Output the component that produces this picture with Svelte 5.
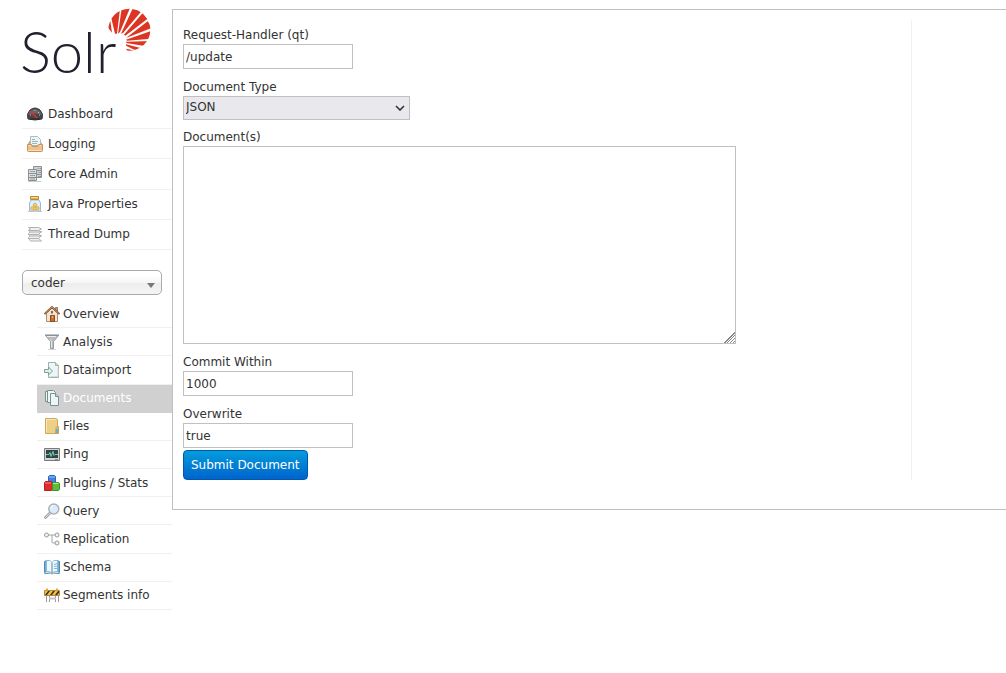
<script>
  let core = $state('coder');
  let handler = $state('/update');
  let docType = $state('JSON');
  let documents = $state('');
  let commitWithin = $state('1000');
  let overwrite = $state('true');
  let current = $state('Documents');

  const icons = {
    dashboard:
      '<path d="M1 13Q-1 8 3 4q5-4 10 0 4 4 2 9-7 2-14 0z" fill="#46464b" stroke="#38383c"/><path d="M1 9q1-5 7-6 6 1 7 6-7-3-14 0z" fill="#66666b"/><path d="M3 9l1 0M4 6l1 1M8 4v1M12 6l-1 1M13 9h-1" stroke="#bbb"/><path d="M3 5l7 7" stroke="#f02a2a" stroke-width="1.5"/><path d="M3 13h10" stroke="#222"/>',
    logging:
      '<path d="M.5 8.500l2-3.500h11l2 3.500z" fill="#d9a56e"/><path d="M3.500.500h7l3 3v6h-10z" fill="#eef6f5" stroke="#a5c0c2"/><path d="M5 3.500h3M5 5.500h6M5 7.500h5" stroke="#94b6bc"/><path d="M.5 8.500h4l1 2h5l1-2h4v6q0 1-1 1h-13q-1 0-1-1z" fill="#edc08c" stroke="#c8935a"/><path d="M1.500 14.500h13M1.500 9.500h2M12.500 9.500h2" stroke="#f9e0bc"/>',
    coreadmin:
      '<g stroke="#8b8f94"><path d="M6.500.500h8v11h-8z" fill="#cfd1d5"/><path d="M6.500 4.500h8M6.500 8.500h8"/><path d="M1.500 3.500h8v11h-8z" fill="#dcdee0"/><path d="M1.500 7.500h8M1.500 11.500h8"/></g><path d="M3 5.500h4M3 9.500h4M3 13h4M10.500 2.500h2M11 6.500h2M11 10.500h2" stroke="#9a9fb4"/><path d="M7 5.500h1M7 9.500h1M7 13h1M13 2.500h1M13 6.500h1M13 10.500h1" stroke="#62ad64"/><path d="M1 15.500h13" stroke="#ccc"/>',
    java:
      '<path d="M4 4h8l1.500 3v8h-11V7z" fill="#e1f0fb" stroke="#8fbce0"/><path d="M3.500.500h8v3h-8z" fill="#deb04c" stroke="#b98a35"/><path d="M4 1.500h7" stroke="#f8df8d"/><g fill="#f0cd72" stroke="#d0a044" stroke-width=".7"><circle cx="8" cy="9" r="1.800"/><circle cx="5.500" cy="12.300" r="1.800"/><circle cx="10.500" cy="12.300" r="1.800"/><circle cx="8" cy="12.500" r="1.500"/></g><path d="M1 15.500h14" stroke="#c4c8cc"/>',
    threads:
      '<g fill="#f0f0f0" stroke="#b0b0b0"><path d="M1.500 12.500h10l3 2.500h-11z"/><path d="M1.500 11.500l2-2h11l-3 3h-10z"/><path d="M1.500 8.500h10l3 1.500h-11z"/><path d="M1.500 7.500l2-2h11l-3 3h-10z"/><path d="M1.500 4.500h10l3 1.500h-11z"/><path d="M1.500 1.500h10l3 1.500-3 1.500h-10l2-1.500z"/></g>',
    overview:
      '<path d="M11.500 1.500h2v5h-2z" fill="#d59873" stroke="#80523a" stroke-width=".7"/><path d="M2.500 7L8 2l5.500 5v8.500h-11z" fill="#f5e5cd" stroke="#b08d6c"/><path d="M.5 8L8 1l7.500 7" fill="none" stroke="#754b36" stroke-width="1.800"/><path d="M1 7.500L8 1l7 6.500" fill="none" stroke="#d3aa8d" stroke-width=".8"/><path d="M6.500 9.500h4v6h-4z" fill="#cc6f2e" stroke="#8f4b1f"/><path d="M7 5h2v2.500H7z" fill="#7c6d64"/><path d="M8.500 10v2" stroke="#f2b577"/>',
    analysis:
      '<path d="M1.500 1.500h13l-5 6v7h-3v-7z" fill="#b9bcc0" stroke="#97999d"/><path d="M3 2.500h9M6 5.500l1.500 2v6" stroke="#eceded" fill="none"/><path d="M1 1h14" stroke="#85888c"/><path d="M4 15.500h8" stroke="#d5d5d5"/>',
    dataimport:
      '<path d="M4.500.500h7l3 3v12h-10z" fill="#edf5f5" stroke="#9ab3b3"/><path d="M11.500.500v3h3" fill="#c7dada" stroke="#9ab3b3"/><path d="M6 14.500h8v-8" fill="none" stroke="#cddcdc"/><path d="M.5 7.500h4V5l4 4-4 4v-2.500h-4z" fill="#e3f1ee" stroke="#7f9f9a"/>',
    documents:
      '<g fill="#edf6f4" stroke="#76938f"><path d="M1.500 1.500h5l2 2v8h-7z"/><path d="M3.500.500h6l2 2v10h-8z"/><path d="M6.500 3.500h5l3 3v9h-8z"/><path d="M11.500 3.500v3h3" fill="#bed5d1"/></g>',
    files:
      '<path d="M1.500.500h11l1 1v14h-12z" fill="#edd087" stroke="#cfa858"/><path d="M2.500 14V1.500h9" fill="none" stroke="#f8e6b3"/><path d="M12 9.500l2.500-1v7h-3z" fill="#e5c473" stroke="#c9a153"/><path d="M13 11v4" stroke="#49b5ed" stroke-width="1.800"/>',
    ping:
      '<path d="M.5 2.500h15v12H.5z" fill="#d1d3d4" stroke="#777b7e"/><path d="M2 4h12v8H2z" fill="#34434a"/><path d="M2 8.500h3l1-2 1 4 2-5 1 4 1-1h3" fill="none" stroke="#72d2aa"/><path d="M11 13.500h3" stroke="#829085"/>',
    plugins:
      '<path d="M4.500 1.500l1-1h5l1 1v6l-1 1h-6z" fill="#3e83e4" stroke="#2966bd"/><path d="M5 2h6" stroke="#9bc3fa"/><path d="M.5 7.500l1-1h6l1 1v7l-1 1h-7z" fill="#e02b2b" stroke="#b51f1f"/><path d="M1 8h6" stroke="#fa8b79"/><path d="M8.500 8.500l1-1h5l1 1v6l-1 1h-6z" fill="#60bc3c" stroke="#429129"/><path d="M9 8.500h5" stroke="#b8eb91"/>',
    query:
      '<path d="M6 10l-4.500 4.500" stroke="#a1a3a7" stroke-width="2.800" stroke-linecap="round"/><path d="M6 10l-4.500 4.500" stroke="#dcdee0" stroke-linecap="round"/><circle cx="9.800" cy="6" r="5" fill="#dcebf9" stroke="#abb1b9" stroke-width="1.500"/><path d="M6.500 6q0-3 3-3.500" stroke="#fff" fill="none"/><path d="M6 15.500h8" stroke="#ececec"/>',
    replication:
      '<path d="M4 4h8M8 4v7q0 1 1 1h3" fill="none" stroke="#a5a5a5"/><g fill="#f4f4f4" stroke="#999"><circle cx="2.500" cy="4" r="2"/><circle cx="13" cy="4" r="2"/><circle cx="13" cy="12" r="2"/></g>',
    schema:
      '<path d="M.5 2.500l2-1v11l-2 1zM15.500 2.500l-2-1v11l2 1z" fill="#73aed3" stroke="#4c8db8"/><path d="M.5 14.500l6-.5 1.500 1 1.500-1 6 .5" fill="none" stroke="#4583aa"/><path d="M2.500 1.500q4-1 5.500 2 1.500-3 5.500-2v11q-4-.5-5.500 2-1.500-2.500-5.500-2z" fill="#eff8fd" stroke="#8dbbd5"/><path d="M8 4v10" stroke="#4e86a6"/><path d="M10 5.500l3-1M10 7.500l3-.5M10 9.500h3" stroke="#88b0c8"/>',
    segments:
      '<path d="M2.500 7v8M5.500 7v8M11.500 7v8M14.500 7v8" stroke="#999"/><path d="M5 11.500h7" stroke="#c4c4c4" stroke-width="2"/><path d="M.5 3.500h15v5H.5z" fill="#fac03c" stroke="#b08a3c"/><path d="M1 8l3-4h2L3 8zM6 8l3-4h2L8 8zM11 8l3-4h1v2l-2 2z" fill="#35322c"/><path d="M3 1.500v2M13 1.500v2" stroke="#eba845" stroke-width="2"/>'
  };

  const mainMenu = [
    { label: 'Dashboard', icon: 'dashboard' },
    { label: 'Logging', icon: 'logging' },
    { label: 'Core Admin', icon: 'coreadmin' },
    { label: 'Java Properties', icon: 'java' },
    { label: 'Thread Dump', icon: 'threads' }
  ];

  const coreMenu = [
    { label: 'Overview', icon: 'overview' },
    { label: 'Analysis', icon: 'analysis' },
    { label: 'Dataimport', icon: 'dataimport' },
    { label: 'Documents', icon: 'documents' },
    { label: 'Files', icon: 'files' },
    { label: 'Ping', icon: 'ping' },
    { label: 'Plugins / Stats', icon: 'plugins' },
    { label: 'Query', icon: 'query' },
    { label: 'Replication', icon: 'replication' },
    { label: 'Schema', icon: 'schema' },
    { label: 'Segments info', icon: 'segments' }
  ];

  function submitDocument(event) {
    event.preventDefault();
  }
</script>

{#snippet menu(items)}
  {#each items as item}
    <li class:active={item.label === current}>
      <a href="#{item.icon}" onclick={() => (current = item.label)}>
        <svg class="icon" viewBox="0 0 16 16" fill="none" aria-hidden="true">{@html icons[item.icon]}</svg>
        {item.label}
      </a>
    </li>
  {/each}
{/snippet}

<div class="page">
  <aside>
    <a class="logo" href="#home">
      <span>Solr</span>
      <svg viewBox="290 25 132 132" aria-hidden="true">
        <clipPath id="sun"><circle cx="357" cy="90" r="63" /></clipPath>
        <g clip-path="url(#sun)" fill="#dc3522">
          <path d="M285 75L300 64 305 99Z" />
          <path d="M303 56L330 20 320 102 314 102Z" />
          <path d="M335 20H361L329 97 323 102Z" />
          <path d="M370 20L392 36 338 100 332 102Z" />
          <path d="M397 40L411 58 345 108 341 105Z" />
          <path d="M412 65L426 84 347 115Z" />
          <path d="M428 92V117L350 123 347 120Z" />
          <path d="M425 124L407 140 348 130V126Z" />
          <path d="M402 148L386 157 347 138V134Z" />
          <path d="M380 154L355 160 347 147Z" />
        </g>
      </svg>
    </a>
    <nav>
      <ul class="main-menu">{@render menu(mainMenu)}</ul>
      <div class="core-selector">
        <select bind:value={core} aria-label="Core Selector">
          <option>coder</option>
        </select>
        <svg viewBox="0 0 8 5" aria-hidden="true"><path d="M0 0h8L4 5z" fill="#777" /></svg>
      </div>
      <ul class="core-menu">{@render menu(coreMenu)}</ul>
    </nav>
  </aside>

  <main>
    <form onsubmit={submitDocument}>
      <label for="qt">Request-Handler (qt)</label>
      <input id="qt" type="text" bind:value={handler} />

      <label for="document-type">Document Type</label>
      <div class="type-select">
        <select id="document-type" bind:value={docType}>
          <option>JSON</option>
          <option>CSV</option>
          <option>XML</option>
        </select>
        <svg viewBox="0 0 10 6" aria-hidden="true">
          <path d="M1 1l4 4 4-4" fill="none" stroke="#333" stroke-width="1.6" />
        </svg>
      </div>

      <label for="document">Document(s)</label>
      <textarea id="document" bind:value={documents}></textarea>

      <label for="commit-within">Commit Within</label>
      <input id="commit-within" type="text" bind:value={commitWithin} />

      <label for="overwrite">Overwrite</label>
      <input id="overwrite" type="text" bind:value={overwrite} />

      <button type="submit">Submit Document</button>
    </form>
  </main>
</div>

<style>
  :global(body) {
    background: #fff;
    color: #333;
    font: 12px/16px 'DejaVu Sans', sans-serif;
  }

  .page {
    display: flex;
    align-items: flex-start;
    padding-top: 9px;
  }

  aside {
    flex: none;
    box-sizing: border-box;
    width: 172px;
    padding-left: 22px;
  }

  .logo {
    position: relative;
    display: block;
    height: 90px;
    margin-left: -2px;
    color: #231f2e;
    font: 300 58px/84px Lato, sans-serif;
    text-decoration: none;
  }

  .logo svg {
    position: absolute;
    top: -1px;
    left: 87px;
    width: 44px;
    height: 44px;
  }

  ul {
    display: grid;
    grid-auto-rows: 1fr;
    margin: 0;
    padding: 0;
    list-style: none;
  }

  .main-menu {
    min-height: 151px;
  }

  .core-menu {
    min-height: 310px;
    margin: 5px 0 0 15px;
  }

  li {
    display: flex;
    border-bottom: 1px solid #f0f0f0;
  }

  li a {
    display: flex;
    flex: 1;
    align-items: center;
    gap: 5px;
    padding-left: 5px;
    color: #333;
    text-decoration: none;
  }

  .core-menu a {
    gap: 3px;
    padding-left: 7px;
  }

  .active {
    background: #d0d0d0;
    border-color: #d0d0d0;
  }

  .active a {
    color: #fff;
  }

  .icon {
    flex: none;
    width: 16px;
    height: 16px;
  }

  select,
  input,
  textarea,
  button {
    box-sizing: border-box;
    margin: 0;
    color: #333;
    font: inherit;
  }

  select {
    display: block;
    width: 100%;
    appearance: none;
  }

  .core-selector,
  .type-select {
    position: relative;
  }

  .core-selector {
    margin: 20px 10px 0 0;
  }

  .core-selector select {
    height: 25px;
    padding: 1px 8px 0;
    border: 1px solid #aaa;
    border-radius: 5px;
    background: linear-gradient(#fff 20%, #f6f6f6 50%, #eee 52%, #f4f4f4 100%);
  }

  .core-selector svg {
    position: absolute;
    top: 13px;
    right: 7px;
    width: 8px;
    height: 5px;
    pointer-events: none;
  }

  main {
    flex: 1;
    min-width: 0;
    padding: 10px 94px 29px 10px;
    border: 1px solid #c0c0c0;
    border-right: 0;
  }

  form {
    padding-top: 7px;
    border-right: 1px solid #f0f0f0;
  }

  label {
    display: block;
    margin-bottom: 1px;
  }

  input,
  textarea {
    display: block;
    margin-bottom: 10px;
    padding: 2px;
    border: 1px solid #c0c0c0;
    background: #fff;
  }

  input {
    width: 170px;
    height: 25px;
  }

  .type-select {
    width: 227px;
    margin-bottom: 9px;
  }

  .type-select select {
    height: 24px;
    padding: 0 2px 2px;
    border: 1px solid #c0c0c0;
    border-radius: 0;
    background: #e9e9ed;
  }

  .type-select svg {
    position: absolute;
    top: 9px;
    right: 5px;
    width: 10px;
    height: 6px;
    pointer-events: none;
  }

  textarea {
    width: 76%;
    height: 198px;
    resize: both;
  }

  textarea::-webkit-resizer {
    background:
      linear-gradient(135deg, #fff 50%, transparent 50%) right bottom / 12px 12px no-repeat,
      repeating-linear-gradient(135deg, #fff 0 1px, #888 1px 2px) right bottom / 12px 12px no-repeat;
  }

  #overwrite {
    margin-bottom: 2px;
  }

  button {
    height: 30px;
    padding: 0 7px;
    border: 1px solid #0058a8;
    border-radius: 4px;
    background: linear-gradient(#049cdb, #0064cd);
    color: #fff;
    cursor: pointer;
  }
</style>
